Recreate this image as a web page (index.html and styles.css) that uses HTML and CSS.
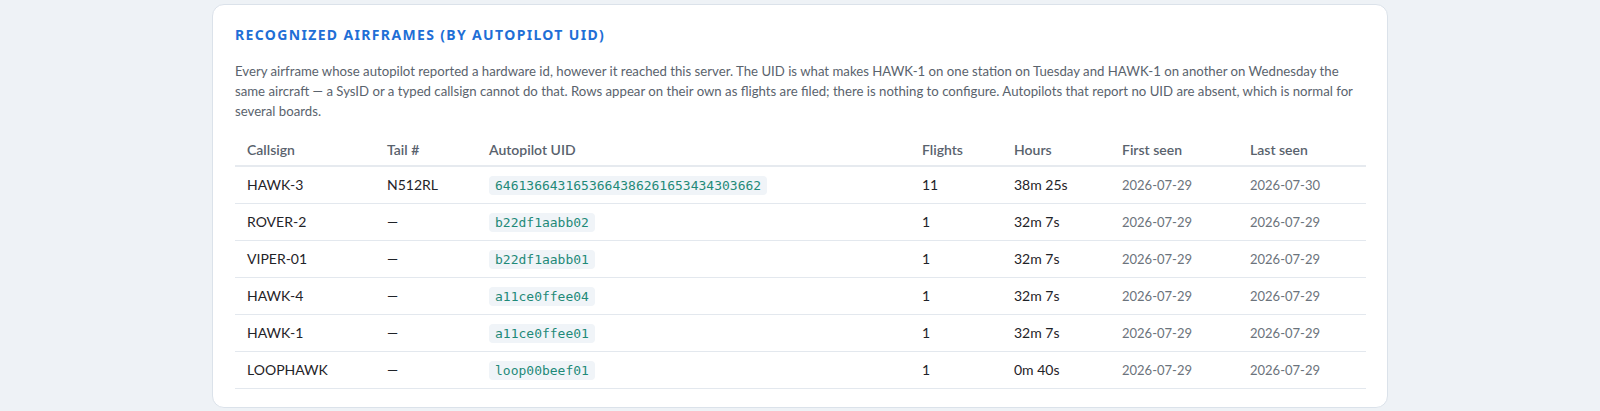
FILE: index.html
```html
<!DOCTYPE html>
<html lang="en">
<head>
<meta charset="utf-8">
<title>Recognized airframes</title>
<link rel="stylesheet" href="styles.css">
</head>
<body>
<main class="page">
  <section class="card">
    <h2 class="card-title">Recognized airframes (by autopilot UID)</h2>
    <p class="card-desc">Every airframe whose autopilot reported a hardware id, however it reached this server. The UID is what makes HAWK-1 on one station on Tuesday and HAWK-1 on another on Wednesday the same aircraft — a SysID or a typed callsign cannot do that. Rows appear on their own as flights are filed; there is nothing to configure. Autopilots that report no UID are absent, which is normal for several boards.</p>
    <table class="grid">
      <colgroup>
        <col class="c-call"><col class="c-tail"><col class="c-uid"><col class="c-flights"><col class="c-hours"><col class="c-first"><col class="c-last">
      </colgroup>
      <thead>
        <tr><th>Callsign</th><th>Tail #</th><th>Autopilot UID</th><th>Flights</th><th>Hours</th><th>First seen</th><th>Last seen</th></tr>
      </thead>
      <tbody>
        <tr><td>HAWK-3</td><td>N512RL</td><td><code class="uid">6461366431653664386261653434303662</code></td><td>11</td><td>38m 25s</td><td class="date">2026-07-29</td><td class="date">2026-07-30</td></tr>
        <tr><td>ROVER-2</td><td>—</td><td><code class="uid">b22df1aabb02</code></td><td>1</td><td>32m 7s</td><td class="date">2026-07-29</td><td class="date">2026-07-29</td></tr>
        <tr><td>VIPER-01</td><td>—</td><td><code class="uid">b22df1aabb01</code></td><td>1</td><td>32m 7s</td><td class="date">2026-07-29</td><td class="date">2026-07-29</td></tr>
        <tr><td>HAWK-4</td><td>—</td><td><code class="uid">a11ce0ffee04</code></td><td>1</td><td>32m 7s</td><td class="date">2026-07-29</td><td class="date">2026-07-29</td></tr>
        <tr><td>HAWK-1</td><td>—</td><td><code class="uid">a11ce0ffee01</code></td><td>1</td><td>32m 7s</td><td class="date">2026-07-29</td><td class="date">2026-07-29</td></tr>
        <tr><td>LOOPHAWK</td><td>—</td><td><code class="uid">loop00beef01</code></td><td>1</td><td>0m 40s</td><td class="date">2026-07-29</td><td class="date">2026-07-29</td></tr>
      </tbody>
    </table>
  </section>
</main>
</body>
</html>
```

FILE: styles.css
```css
* { box-sizing: border-box; }
html, body { margin: 0; padding: 0; }
body {
  background: #eef2f6;
  font-family: "Lato", "Noto Sans", sans-serif;
  color: #1f2328;
}
.page {
  padding-top: 4px;
}
.card {
  width: 1176px;
  margin: 0 auto;
  background: #ffffff;
  border: 1px solid #dbe2ea;
  border-radius: 12px;
  padding: 20px 21px 18px 22px;
}
.card-title {
  margin: 0;
  font-family: "Noto Sans", sans-serif;
  font-size: 14px;
  line-height: 20px;
  font-weight: 700;
  letter-spacing: 1.35px;
  text-transform: uppercase;
  color: #1f6fd6;
}
.card-desc {
  margin: 16px 0 0;
  font-size: 13.2px;
  line-height: 20px;
  color: #5a636d;
}
.grid {
  width: 100%;
  margin-top: 12px;
  border-collapse: collapse;
  table-layout: fixed;
  font-size: 14px;
}
.c-call { width: 140px; }
.c-tail { width: 102px; }
.c-uid { width: 433px; }
.c-flights { width: 92px; }
.c-hours { width: 108px; }
.c-first { width: 128px; }
.c-last { width: auto; }
.grid th {
  text-align: left;
  font-weight: 600;
  color: #59626d;
  padding: 7px 12px 5px;
  line-height: 20px;
  border-bottom: 2px solid #e6eaef;
}
.grid td {
  height: 37px;
  padding: 8px 12px;
  line-height: 20px;
  border-bottom: 1px solid #e3e8ee;
  color: #1f2328;
  white-space: nowrap;
}
.grid td.date {
  font-size: 13px;
  color: #6b737c;
}
.uid {
  font-family: "DejaVu Sans Mono", "Liberation Mono", monospace;
  font-size: 13px;
  line-height: 1;
  padding: 2px 6px;
  border-radius: 4px;
  background: #f0f4f8;
  color: #1f8a78;
}
```
